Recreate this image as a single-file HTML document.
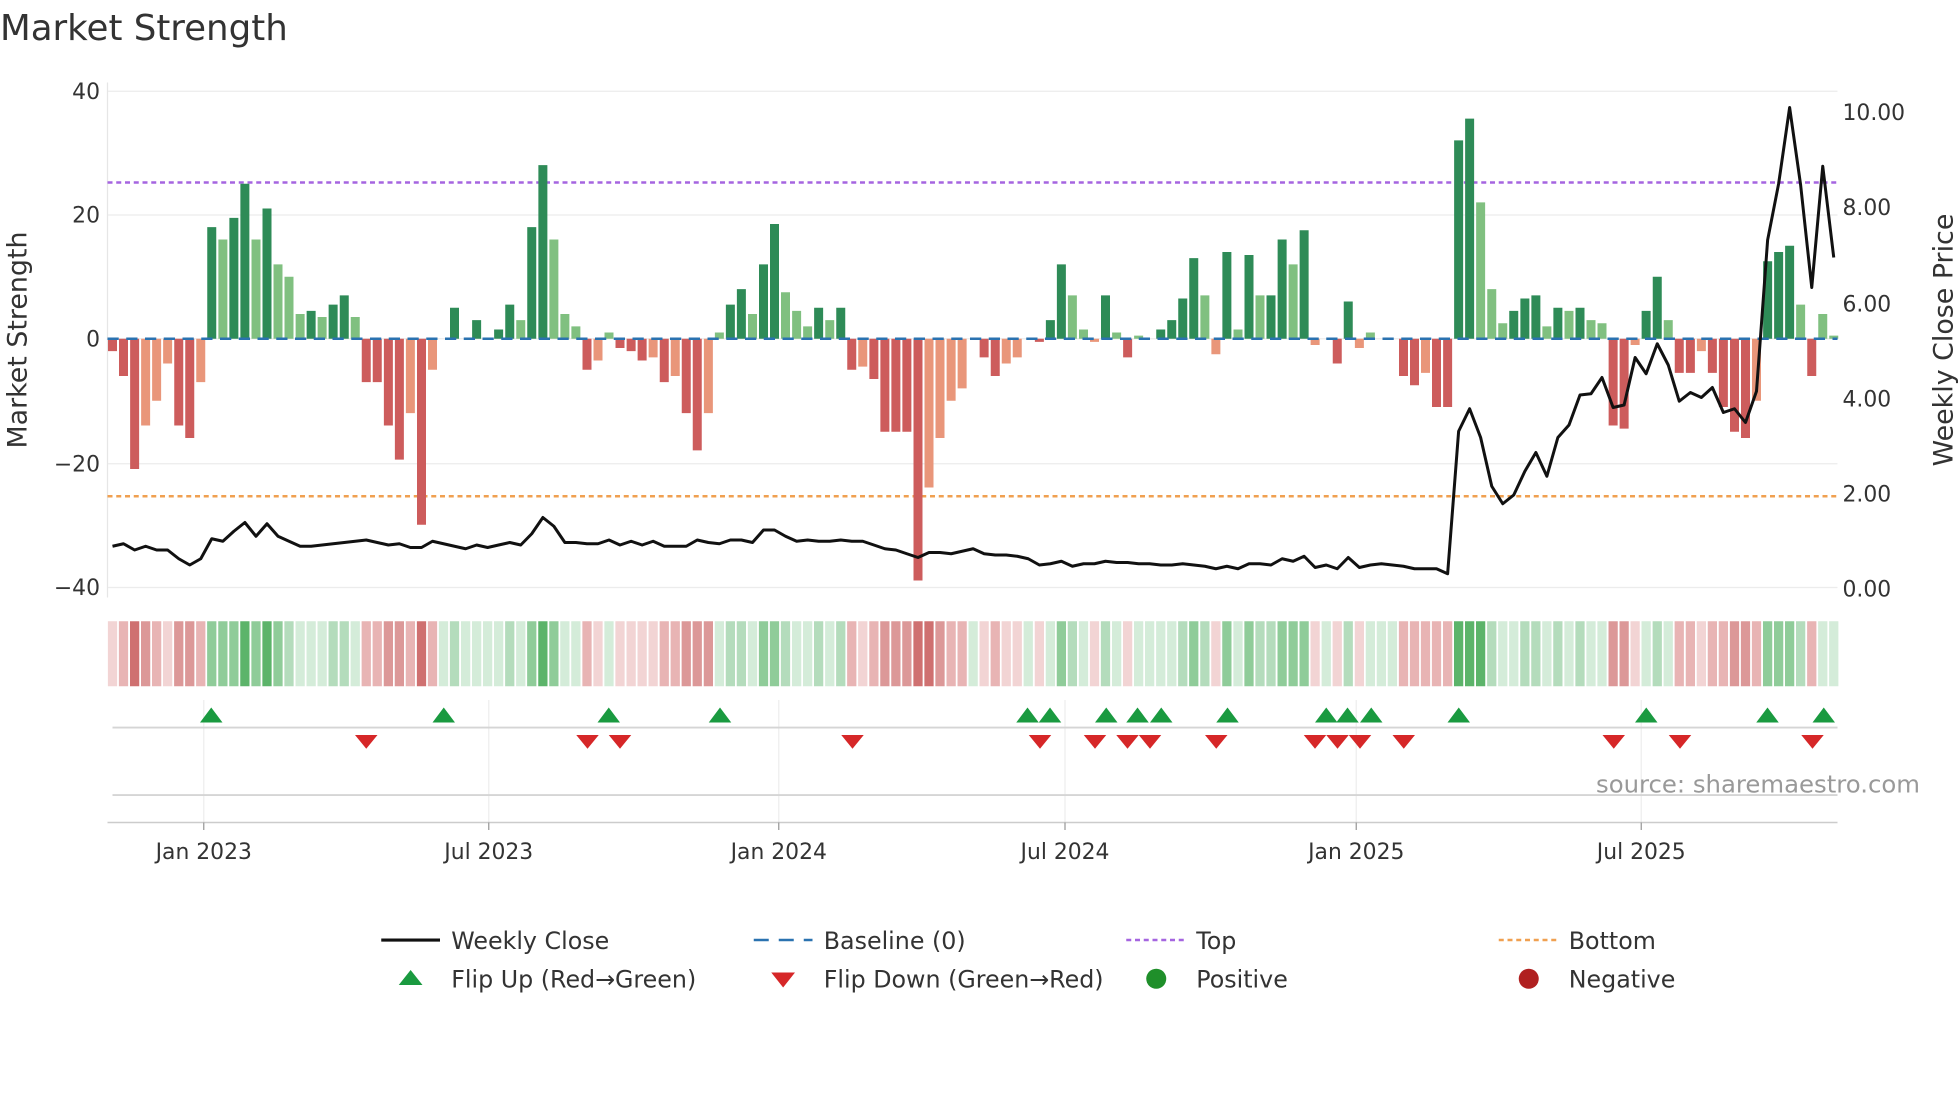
<!DOCTYPE html>
<html><head><meta charset="utf-8"><style>
html,body{margin:0;padding:0;background:#fff;}
svg{display:block;font-family:"DejaVu Sans","Liberation Sans",sans-serif;}
</style></head><body>
<svg width="1960" height="1102" viewBox="0 0 1568 881.6" xmlns="http://www.w3.org/2000/svg">
<rect width="1568" height="882" fill="#fff"/>
<text x="0" y="32" font-size="28.5" fill="#333">Market Strength</text>
<g stroke="#ececec" stroke-width="1">
<line x1="86" y1="73" x2="1470" y2="73"/><line x1="86" y1="172" x2="1470" y2="172"/>
<line x1="86" y1="271" x2="1470" y2="271"/><line x1="86" y1="371" x2="1470" y2="371"/>
<line x1="86" y1="470" x2="1470" y2="470"/>
</g>
<line x1="86" y1="66" x2="86" y2="478" stroke="#e6e6e6"/>
<line x1="86" y1="146" x2="1470" y2="146" stroke="#a565e0" stroke-width="2" stroke-dasharray="4,3"/>
<line x1="86" y1="397" x2="1470" y2="397" stroke="#f0a050" stroke-width="2" stroke-dasharray="4,3"/>

<g fill="none" stroke-width="7.2">
<path stroke="#cd5c5c" d="M90 271V280.9M98.8 271V300.8M107.7 271V375.2M143 271V340.4M151.8 271V350.4M293 271V305.7M301.8 271V305.7M310.7 271V340.4M319.5 271V367.7M337.2 271V419.8M469.6 271V295.8M496 271V278.4M504.9 271V280.9M513.7 271V288.4M531.4 271V305.7M549 271V330.5M557.8 271V360.3M681.4 271V295.8M699.1 271V303.2M707.9 271V345.4M716.7 271V345.4M725.5 271V345.4M734.4 271V464.4M787.3 271V285.9M796.2 271V300.8M831.5 271V273.5M902.1 271V285.9M1069.8 271V290.8M1122.8 271V300.8M1131.6 271V308.2M1149.2 271V325.6M1158.1 271V325.6M1290.5 271V340.4M1299.3 271V342.9M1343.4 271V298.3M1352.3 271V298.3M1369.9 271V298.3M1378.7 271V325.6M1387.6 271V345.4M1396.4 271V350.4M1449.4 271V300.8"/>
<path stroke="#e9967a" d="M116.5 271V340.4M125.3 271V320.6M134.1 271V290.8M160.6 271V305.7M328.3 271V330.5M346 271V295.8M478.4 271V288.4M522.5 271V285.9M540.2 271V300.8M566.7 271V330.5M690.2 271V293.3M743.2 271V390M752 271V350.4M760.9 271V320.6M769.7 271V310.7M805 271V290.8M813.8 271V285.9M875.6 271V273.5M972.7 271V283.4M1052.1 271V276M1087.5 271V278.4M1140.4 271V298.3M1308.1 271V276M1361.1 271V280.9M1405.2 271V320.6"/>
<path stroke="#2e8b57" d="M169.4 271V181.7M187.1 271V174.3M195.9 271V147M213.6 271V166.8M248.9 271V248.7M266.5 271V243.7M275.4 271V236.3M363.6 271V246.2M381.3 271V256.1M398.9 271V263.6M407.8 271V243.7M425.4 271V181.7M434.3 271V132.1M584.3 271V243.7M593.1 271V231.3M610.8 271V211.5M619.6 271V179.2M654.9 271V246.2M672.6 271V246.2M840.3 271V256.1M849.1 271V211.5M884.4 271V236.3M928.6 271V263.6M937.4 271V256.1M946.2 271V238.8M955 271V206.5M981.5 271V201.6M999.2 271V204M1016.8 271V236.3M1025.7 271V191.6M1043.3 271V184.2M1078.6 271V241.2M1166.9 271V112.3M1175.7 271V94.9M1211 271V248.7M1219.9 271V238.8M1228.7 271V236.3M1246.3 271V246.2M1264 271V246.2M1316.9 271V248.7M1325.8 271V221.4M1414.1 271V209M1422.9 271V201.6M1431.7 271V196.6"/>
<path stroke="#80c080" d="M178.3 271V191.6M204.8 271V191.6M222.4 271V211.5M231.2 271V221.4M240.1 271V251.2M257.7 271V253.6M284.2 271V253.6M416.6 271V256.1M443.1 271V191.6M451.9 271V251.2M460.7 271V261.1M487.2 271V266M575.5 271V266M602 271V251.2M628.4 271V233.8M637.3 271V248.7M646.1 271V261.1M663.8 271V256.1M857.9 271V236.3M866.8 271V263.6M893.3 271V266M910.9 271V268.5M963.9 271V236.3M990.4 271V263.6M1008 271V236.3M1034.5 271V211.5M1096.3 271V266M1184.5 271V161.9M1193.4 271V231.3M1202.2 271V258.6M1237.5 271V261.1M1255.2 271V248.7M1272.8 271V256.1M1281.6 271V258.6M1334.6 271V256.1M1440.5 271V243.7M1458.2 271V251.2M1467 271V268.5"/>
</g>
<line x1="86" y1="271" x2="1470" y2="271" stroke="#2a72b0" stroke-width="2" stroke-dasharray="9,6"/>
<polyline fill="none" stroke="#111" stroke-width="2.4" stroke-linejoin="round" points="90,437 98.8,435 107.7,440 116.5,437 125.3,440 134.1,440 143,447 151.8,452 160.6,447 169.4,431 178.3,433 187.1,425 195.9,418 204.8,429 213.6,419 222.4,429 231.2,433 240.1,437 248.9,437 257.7,436 266.5,435 275.4,434 284.2,433 293,432 301.8,434 310.7,436 319.5,435 328.3,438 337.2,438 346,433 354.8,435 363.6,437 372.5,439 381.3,436 390.1,438 398.9,436 407.8,434 416.6,436 425.4,427 434.3,414 443.1,421 451.9,434 460.7,434 469.6,435 478.4,435 487.2,432 496,436 504.9,433 513.7,436 522.5,433 531.4,437 540.2,437 549,437 557.8,432 566.7,434 575.5,435 584.3,432 593.1,432 602,434 610.8,424 619.6,424 628.4,429 637.3,433 646.1,432 654.9,433 663.8,433 672.6,432 681.4,433 690.2,433 699.1,436 707.9,439 716.7,440 725.5,443 734.4,446 743.2,442 752,442 760.9,443 769.7,441 778.5,439 787.3,443 796.2,444 805,444 813.8,445 822.6,447 831.5,452 840.3,451 849.1,449 857.9,453 866.8,451 875.6,451 884.4,449 893.3,450 902.1,450 910.9,451 919.7,451 928.6,452 937.4,452 946.2,451 955,452 963.9,453 972.7,455 981.5,453 990.4,455 999.2,451 1008,451 1016.8,452 1025.7,447 1034.5,449 1043.3,445 1052.1,454 1061,452 1069.8,455 1078.6,446 1087.5,454 1096.3,452 1105.1,451 1113.9,452 1122.8,453 1131.6,455 1140.4,455 1149.2,455 1158.1,459 1166.9,345 1175.7,327 1184.5,350 1193.4,389 1202.2,403 1211,396 1219.9,377 1228.7,362 1237.5,381 1246.3,350 1255.2,340 1264,316 1272.8,315 1281.6,302 1290.5,326 1299.3,324 1308.1,286 1316.9,299 1325.8,275 1334.6,292 1343.4,321 1352.3,314 1361.1,318 1369.9,310 1378.7,330 1387.6,327 1396.4,338 1405.2,313 1414.1,192 1422.9,147 1431.7,86 1440.5,148 1449.4,230 1458.2,133 1467,206"/>

<g font-size="17.5" fill="#333" text-anchor="end">
<text x="80" y="79">40</text><text x="80" y="178">20</text><text x="80" y="277">0</text>
<text x="80" y="377">−20</text><text x="80" y="476">−40</text>
</g>
<g font-size="17.5" fill="#333">
<text x="1474" y="96">10.00</text><text x="1474" y="172">8.00</text><text x="1474" y="249">6.00</text>
<text x="1474" y="325">4.00</text><text x="1474" y="401">2.00</text><text x="1474" y="477">0.00</text>
</g>
<text transform="translate(21,272) rotate(-90)" font-size="21.5" fill="#333" text-anchor="middle">Market Strength</text>
<text transform="translate(1562,272) rotate(-90)" font-size="21.5" fill="#333" text-anchor="middle">Weekly Close Price</text>

<g fill="none" stroke-width="7.4">
<path stroke="#d4ecd9" d="M240.1 497v52M248.9 497v52M257.7 497v52M284.2 497v52M354.8 497v52M372.5 497v52M381.3 497v52M390.1 497v52M398.9 497v52M416.6 497v52M451.9 497v52M460.7 497v52M487.2 497v52M575.5 497v52M602 497v52M637.3 497v52M646.1 497v52M663.8 497v52M778.5 497v52M822.6 497v52M840.3 497v52M866.8 497v52M893.3 497v52M910.9 497v52M919.7 497v52M928.6 497v52M937.4 497v52M990.4 497v52M1061 497v52M1096.3 497v52M1105.1 497v52M1113.9 497v52M1202.2 497v52M1211 497v52M1237.5 497v52M1255.2 497v52M1272.8 497v52M1281.6 497v52M1316.9 497v52M1334.6 497v52M1458.2 497v52M1467 497v52"/>
<path stroke="#b4dcbc" d="M231.2 497v52M266.5 497v52M275.4 497v52M363.6 497v52M407.8 497v52M584.3 497v52M593.1 497v52M628.4 497v52M654.9 497v52M672.6 497v52M857.9 497v52M884.4 497v52M946.2 497v52M963.9 497v52M1008 497v52M1016.8 497v52M1078.6 497v52M1193.4 497v52M1219.9 497v52M1228.7 497v52M1246.3 497v52M1264 497v52M1325.8 497v52M1440.5 497v52"/>
<path stroke="#8fcc99" d="M169.4 497v52M178.3 497v52M187.1 497v52M204.8 497v52M222.4 497v52M425.4 497v52M443.1 497v52M610.8 497v52M619.6 497v52M849.1 497v52M955 497v52M981.5 497v52M999.2 497v52M1025.7 497v52M1034.5 497v52M1043.3 497v52M1414.1 497v52M1422.9 497v52M1431.7 497v52"/>
<path stroke="#5cb46a" d="M195.9 497v52M213.6 497v52M434.3 497v52M1166.9 497v52M1175.7 497v52M1184.5 497v52"/>
<path stroke="#f2d4d4" d="M90 497v52M134.1 497v52M478.4 497v52M496 497v52M504.9 497v52M513.7 497v52M522.5 497v52M690.2 497v52M787.3 497v52M805 497v52M813.8 497v52M831.5 497v52M875.6 497v52M902.1 497v52M972.7 497v52M1052.1 497v52M1069.8 497v52M1087.5 497v52M1308.1 497v52M1361.1 497v52"/>
<path stroke="#e8b4b4" d="M98.8 497v52M125.3 497v52M160.6 497v52M293 497v52M301.8 497v52M328.3 497v52M346 497v52M469.6 497v52M531.4 497v52M540.2 497v52M681.4 497v52M699.1 497v52M760.9 497v52M769.7 497v52M796.2 497v52M1122.8 497v52M1131.6 497v52M1140.4 497v52M1149.2 497v52M1158.1 497v52M1343.4 497v52M1352.3 497v52M1369.9 497v52M1378.7 497v52M1405.2 497v52M1449.4 497v52"/>
<path stroke="#dc9898" d="M116.5 497v52M143 497v52M151.8 497v52M310.7 497v52M319.5 497v52M549 497v52M557.8 497v52M566.7 497v52M707.9 497v52M716.7 497v52M725.5 497v52M752 497v52M1290.5 497v52M1299.3 497v52M1387.6 497v52M1396.4 497v52"/>
<path stroke="#cf7070" d="M107.7 497v52M337.2 497v52M734.4 497v52M743.2 497v52"/>
</g>

<g stroke="#eee" stroke-width="1">
<line x1="163" y1="560" x2="163" y2="658"/><line x1="391" y1="560" x2="391" y2="658"/>
<line x1="623" y1="560" x2="623" y2="658"/><line x1="852" y1="560" x2="852" y2="658"/>
<line x1="1085" y1="560" x2="1085" y2="658"/><line x1="1313" y1="560" x2="1313" y2="658"/>
</g>
<line x1="90" y1="582" x2="1470" y2="582" stroke="#d5d5d5" stroke-width="1.5"/>
<line x1="90" y1="636" x2="1470" y2="636" stroke="#d5d5d5" stroke-width="1.5"/>
<line x1="86" y1="658" x2="1470" y2="658" stroke="#ccc" stroke-width="1.2"/>

<g fill="#1a9a40">
<path d="M160 578h18l-9-12zM346 578h18l-9-12zM478 578h18l-9-12zM567 578h18l-9-12zM813 578h18l-9-12zM831 578h18l-9-12zM876 578h18l-9-12zM901 578h18l-9-12zM920 578h18l-9-12zM973 578h18l-9-12zM1052 578h18l-9-12zM1069 578h18l-9-12zM1088 578h18l-9-12zM1158 578h18l-9-12zM1308 578h18l-9-12zM1405 578h18l-9-12zM1450 578h18l-9-12z"/>
</g>
<g fill="#d62728">
<path d="M284 588h18l-9 11zM461 588h18l-9 11zM487 588h18l-9 11zM673 588h18l-9 11zM823 588h18l-9 11zM867 588h18l-9 11zM893 588h18l-9 11zM911 588h18l-9 11zM964 588h18l-9 11zM1043 588h18l-9 11zM1061 588h18l-9 11zM1079 588h18l-9 11zM1114 588h18l-9 11zM1282 588h18l-9 11zM1335 588h18l-9 11zM1441 588h18l-9 11z"/>
</g>

<text x="1536" y="634" font-size="19.5" fill="#999" text-anchor="end">source: sharemaestro.com</text>
<g stroke="#999"><line x1="163" y1="658" x2="163" y2="664"/><line x1="391" y1="658" x2="391" y2="664"/><line x1="623" y1="658" x2="623" y2="664"/><line x1="852" y1="658" x2="852" y2="664"/><line x1="1085" y1="658" x2="1085" y2="664"/><line x1="1313" y1="658" x2="1313" y2="664"/></g>
<g font-size="17.5" fill="#333" text-anchor="middle">
<text x="163" y="687">Jan 2023</text><text x="391" y="687">Jul 2023</text><text x="623" y="687">Jan 2024</text>
<text x="852" y="687">Jul 2024</text><text x="1085" y="687">Jan 2025</text><text x="1313" y="687">Jul 2025</text>
</g>
<g font-size="19" fill="#333">
<line x1="305" y1="752" x2="352" y2="752" stroke="#111" stroke-width="2.5"/><text x="361" y="759">Weekly Close</text>
<line x1="603" y1="752" x2="650" y2="752" stroke="#2a72b0" stroke-width="2" stroke-dasharray="12,8"/><text x="659" y="759">Baseline (0)</text>
<line x1="901" y1="752" x2="948" y2="752" stroke="#a565e0" stroke-width="2" stroke-dasharray="4,3"/><text x="957" y="759">Top</text>
<line x1="1199" y1="752" x2="1246" y2="752" stroke="#f0a050" stroke-width="2" stroke-dasharray="4,3"/><text x="1255" y="759">Bottom</text>
<polygon points="319,788 338,788 328.5,776" fill="#1a9a40"/><text x="361" y="790">Flip Up (Red→Green)</text>
<polygon points="617,778 636,778 626.5,790" fill="#d62728"/><text x="659" y="790">Flip Down (Green→Red)</text>
<circle cx="925" cy="783" r="8" fill="#1f8f2a"/><text x="957" y="790">Positive</text>
<circle cx="1223" cy="783" r="8" fill="#b02020"/><text x="1255" y="790">Negative</text>
</g>
</svg>
</body></html>
